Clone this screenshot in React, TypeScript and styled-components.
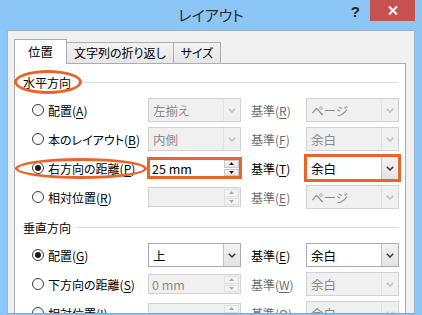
import React from "react";
import styled, { createGlobalStyle, css } from "styled-components";

const GlobalStyle = createGlobalStyle`
  html, body {
    margin: 0;
    padding: 0;
    background: #8cc6f7;
  }
  body {
    font-family: "Noto Sans CJK JP", "Noto Sans", sans-serif;
    font-size: 12px;
    color: #000;
    font-feature-settings: "palt";
  }
`;

const ORANGE = "#e8642a";

const Window = styled.div`
  width: 422px;
  height: 315px;
  overflow: hidden;
  background: #8cc6f7;
  display: flex;
  flex-direction: column;
`;

const TitleBar = styled.div`
  height: 30px;
  flex: none;
  display: grid;
  grid-template-columns: 1fr auto 1fr;
  align-items: start;
`;

const Title = styled.div`
  grid-column: 2;
  font-size: 15px;
  line-height: 30px;
  color: #2b2b2b;
`;

const Controls = styled.div`
  justify-self: end;
  display: flex;
  align-items: flex-start;
  padding-right: 7px;
`;

const HelpButton = styled.div`
  font: bold 15px "Liberation Sans", sans-serif;
  color: #222;
  margin-top: 3px;
  margin-right: 10px;
`;

const CloseButton = styled.div`
  width: 45px;
  height: 21px;
  background: #c75050;
  display: flex;
  align-items: center;
  justify-content: center;
`;

const Client = styled.div`
  flex: 1;
  min-height: 0;
  margin: 0 7px 1px 7px;
  background: #f0f0f0;
  border: 1px solid #9fb3c5;
  border-bottom-color: #a0a0a0;
  padding: 8px 8px 0 6px;
  overflow: hidden;
`;

const TabStrip = styled.div`
  display: flex;
  align-items: flex-end;
`;

const Tab = styled.div<{ $active?: boolean }>`
  box-sizing: border-box;
  border: 1px solid #acacac;
  border-bottom: none;
  display: flex;
  align-items: center;
  justify-content: center;
  ${(p) =>
    p.$active
      ? css`
          height: 25px;
          margin-bottom: -1px;
          background: #fff;
          position: relative;
          z-index: 1;
          padding: 0 13px 2px;
          font-size: 12.5px;
        `
      : css`
          height: 21px;
          margin-left: -1px;
          background: linear-gradient(#f2f2f2, #e6e6e6);
          padding: 0 7px 1px;
        `}
`;

const Pane = styled.div`
  background: #fff;
  border: 1px solid #acacac;
  padding: 0 6px 0 8px;
  height: 400px;
`;

const Heading = styled.div`
  display: flex;
  align-items: center;
  height: 18px;
  padding: 9px 0 7px;
`;

const HeadingRule = styled.div`
  flex: 1;
  height: 1px;
  background: #dcdcdc;
  margin: 1px 1px 0 6px;
`;

const Circled = styled.span<{ $t: number; $r: number; $b: number; $l: number }>`
  position: relative;
  display: inline-flex;
  align-items: center;
  &::after {
    content: "";
    position: absolute;
    top: ${(p) => p.$t}px;
    right: ${(p) => p.$r}px;
    bottom: ${(p) => p.$b}px;
    left: ${(p) => p.$l}px;
    border: 3px solid ${ORANGE};
    border-radius: 50%;
    pointer-events: none;
  }
`;

const Rows = styled.div`
  display: grid;
  grid-template-columns: 116px 93px 65px 93px;
  grid-auto-rows: 24px;
  row-gap: 5px;
  padding-left: 9px;
`;

const RadioLabel = styled.div`
  display: flex;
  align-items: center;
  gap: 4px;
  white-space: nowrap;
`;

const Radio = styled.span<{ $checked?: boolean }>`
  box-sizing: border-box;
  width: 12px;
  height: 12px;
  border-radius: 50%;
  border: 1px solid #3c3c3c;
  background: linear-gradient(#f4f4f4, #fff);
  display: flex;
  align-items: center;
  justify-content: center;
  &::after {
    content: "";
    width: 6px;
    height: 6px;
    border-radius: 50%;
    background: ${(p) => (p.$checked ? "#1a1a1a" : "transparent")};
  }
`;

const RefLabel = styled.div<{ $disabled?: boolean }>`
  display: flex;
  align-items: center;
  padding-left: 10px;
  color: ${(p) => (p.$disabled ? "#6d6d6d" : "#000")};
  white-space: nowrap;
`;

const Key = styled.span`
  text-decoration: underline;
  text-underline-offset: 2px;
`;

const Combo = styled.div<{ $disabled?: boolean; $highlight?: boolean }>`
  box-sizing: border-box;
  height: 24px;
  display: flex;
  border: 1px solid ${(p) => (p.$disabled ? "#d2d2d2" : "#acacac")};
  background: ${(p) => (p.$disabled ? "#f0f0f0" : "#fff")};
  color: ${(p) => (p.$disabled ? "#8b8b8b" : "#000")};
  ${(p) =>
    p.$highlight &&
    css`
      outline: 3px solid ${ORANGE};
      outline-offset: -1px;
    `}
`;

const ComboText = styled.div`
  flex: 1;
  display: flex;
  align-items: center;
  padding-left: 4px;
  font-size: 12.5px;
`;

const DropButton = styled.div<{ $disabled?: boolean }>`
  width: 16px;
  display: flex;
  align-items: center;
  justify-content: center;
  border-left: 1px solid ${(p) => (p.$disabled ? "#e2e2e2" : "#c4c4c4")};
  background: ${(p) =>
    p.$disabled ? "#f0f0f0" : "linear-gradient(#f3f3f3, #e3e3e3)"};
`;

const Spin = styled.div<{ $disabled?: boolean; $highlight?: boolean }>`
  box-sizing: border-box;
  height: 20px;
  align-self: center;
  display: flex;
  border: 1px solid ${(p) => (p.$disabled ? "#d2d2d2" : "#acacac")};
  background: ${(p) => (p.$disabled ? "#f0f0f0" : "#fff")};
  color: ${(p) => (p.$disabled ? "#8b8b8b" : "#000")};
  ${(p) =>
    p.$highlight &&
    css`
      outline: 3px solid ${ORANGE};
      outline-offset: -2px;
    `}
`;

const SpinText = styled.div`
  flex: 1;
  display: flex;
  align-items: center;
  padding-left: 3px;
  font-size: 12.5px;
`;

const SpinButtons = styled.div`
  width: 15px;
  display: flex;
  flex-direction: column;
  padding: 1px 1px 1px 0;
  gap: 1px;
`;

const SpinHalf = styled.div<{ $disabled?: boolean }>`
  flex: 1;
  display: flex;
  align-items: center;
  justify-content: center;
  border: 1px solid ${(p) => (p.$disabled ? "#e0e0e0" : "#c8c8c8")};
  background: ${(p) =>
    p.$disabled ? "#f4f4f4" : "linear-gradient(#f6f6f6, #e6e6e6)"};
`;

const Chevron = ({ color }: { color: string }) => (
  <svg width="8" height="5" viewBox="0 0 8 5">
    <path d="M0.8 0.8 L4 4 L7.2 0.8" fill="none" stroke={color} strokeWidth="1.6" />
  </svg>
);

const Tri = ({ up, color }: { up?: boolean; color: string }) => (
  <svg width="5" height="3" viewBox="0 0 5 3">
    <path d={up ? "M0 3 L2.5 0 L5 3 Z" : "M0 0 L5 0 L2.5 3 Z"} fill={color} />
  </svg>
);

type Ctrl = { kind: "combo" | "spin"; text: string; disabled?: boolean; highlight?: boolean };

type RowData = {
  label: string;
  key: string;
  checked?: boolean;
  circled?: boolean;
  ctrl: Ctrl;
  refKey: string;
  refDisabled?: boolean;
  ref2: Ctrl;
};

const horizontal: RowData[] = [
  { label: "配置", key: "A", ctrl: { kind: "combo", text: "左揃え", disabled: true }, refKey: "R", refDisabled: true, ref2: { kind: "combo", text: "ページ", disabled: true } },
  { label: "本のレイアウト", key: "B", ctrl: { kind: "combo", text: "内側", disabled: true }, refKey: "F", refDisabled: true, ref2: { kind: "combo", text: "余白", disabled: true } },
  { label: "右方向の距離", key: "P", checked: true, circled: true, ctrl: { kind: "spin", text: "25 mm", highlight: true }, refKey: "T", ref2: { kind: "combo", text: "余白", highlight: true } },
  { label: "相対位置", key: "R", ctrl: { kind: "spin", text: "", disabled: true }, refKey: "E", refDisabled: true, ref2: { kind: "combo", text: "ページ", disabled: true } },
];

const vertical: RowData[] = [
  { label: "配置", key: "G", checked: true, ctrl: { kind: "combo", text: "上" }, refKey: "E", ref2: { kind: "combo", text: "余白" } },
  { label: "下方向の距離", key: "S", ctrl: { kind: "spin", text: "0 mm", disabled: true }, refKey: "W", refDisabled: true, ref2: { kind: "combo", text: "余白", disabled: true } },
  { label: "相対位置", key: "I", ctrl: { kind: "spin", text: "", disabled: true }, refKey: "O", refDisabled: true, ref2: { kind: "combo", text: "余白", disabled: true } },
];

const Control = ({ c }: { c: Ctrl }) => {
  if (c.kind === "combo") {
    return (
      <Combo $disabled={c.disabled} $highlight={c.highlight}>
        <ComboText>{c.text}</ComboText>
        <DropButton $disabled={c.disabled}>
          <Chevron color={c.disabled ? "#c2c2c2" : "#404040"} />
        </DropButton>
      </Combo>
    );
  }
  const arrow = c.disabled ? "#a8a8a8" : "#222";
  return (
    <Spin $disabled={c.disabled} $highlight={c.highlight}>
      <SpinText>{c.text}</SpinText>
      <SpinButtons>
        <SpinHalf $disabled={c.disabled}>
          <Tri up color={arrow} />
        </SpinHalf>
        <SpinHalf $disabled={c.disabled}>
          <Tri color={arrow} />
        </SpinHalf>
      </SpinButtons>
    </Spin>
  );
};

const Row = ({ r }: { r: RowData }) => {
  const label = (
    <RadioLabel>
      <Radio $checked={r.checked} />
      <span>
        {r.label}(<Key>{r.key}</Key>)
      </span>
    </RadioLabel>
  );
  return (
    <>
      {r.circled ? (
        <Circled $t={2} $r={1} $b={1} $l={-17}>
          {label}
        </Circled>
      ) : (
        label
      )}
      <Control c={r.ctrl} />
      <RefLabel $disabled={r.refDisabled}>
        <span>
          基準(<Key>{r.refKey}</Key>)
        </span>
      </RefLabel>
      <Control c={r.ref2} />
    </>
  );
};

export default function App() {
  return (
    <>
      <GlobalStyle />
      <Window>
        <TitleBar>
          <Title>レイアウト</Title>
          <Controls>
            <HelpButton>?</HelpButton>
            <CloseButton>
              <svg width="10" height="9" viewBox="0 0 10 9">
                <path d="M1 0.5 L9 8.5 M9 0.5 L1 8.5" stroke="#fff" strokeWidth="2" />
              </svg>
            </CloseButton>
          </Controls>
        </TitleBar>
        <Client>
          <TabStrip>
            <Tab $active>位置</Tab>
            <Tab>文字列の折り返し</Tab>
            <Tab>サイズ</Tab>
          </TabStrip>
          <Pane>
            <Heading>
              <Circled $t={-4} $r={-11} $b={-3} $l={-9}>
                水平方向
              </Circled>
              <HeadingRule />
            </Heading>
            <Rows>
              {horizontal.map((r, i) => (
                <Row key={i} r={r} />
              ))}
            </Rows>
            <Heading>
              垂直方向
              <HeadingRule />
            </Heading>
            <Rows>
              {vertical.map((r, i) => (
                <Row key={i} r={r} />
              ))}
            </Rows>
          </Pane>
        </Client>
      </Window>
    </>
  );
}
